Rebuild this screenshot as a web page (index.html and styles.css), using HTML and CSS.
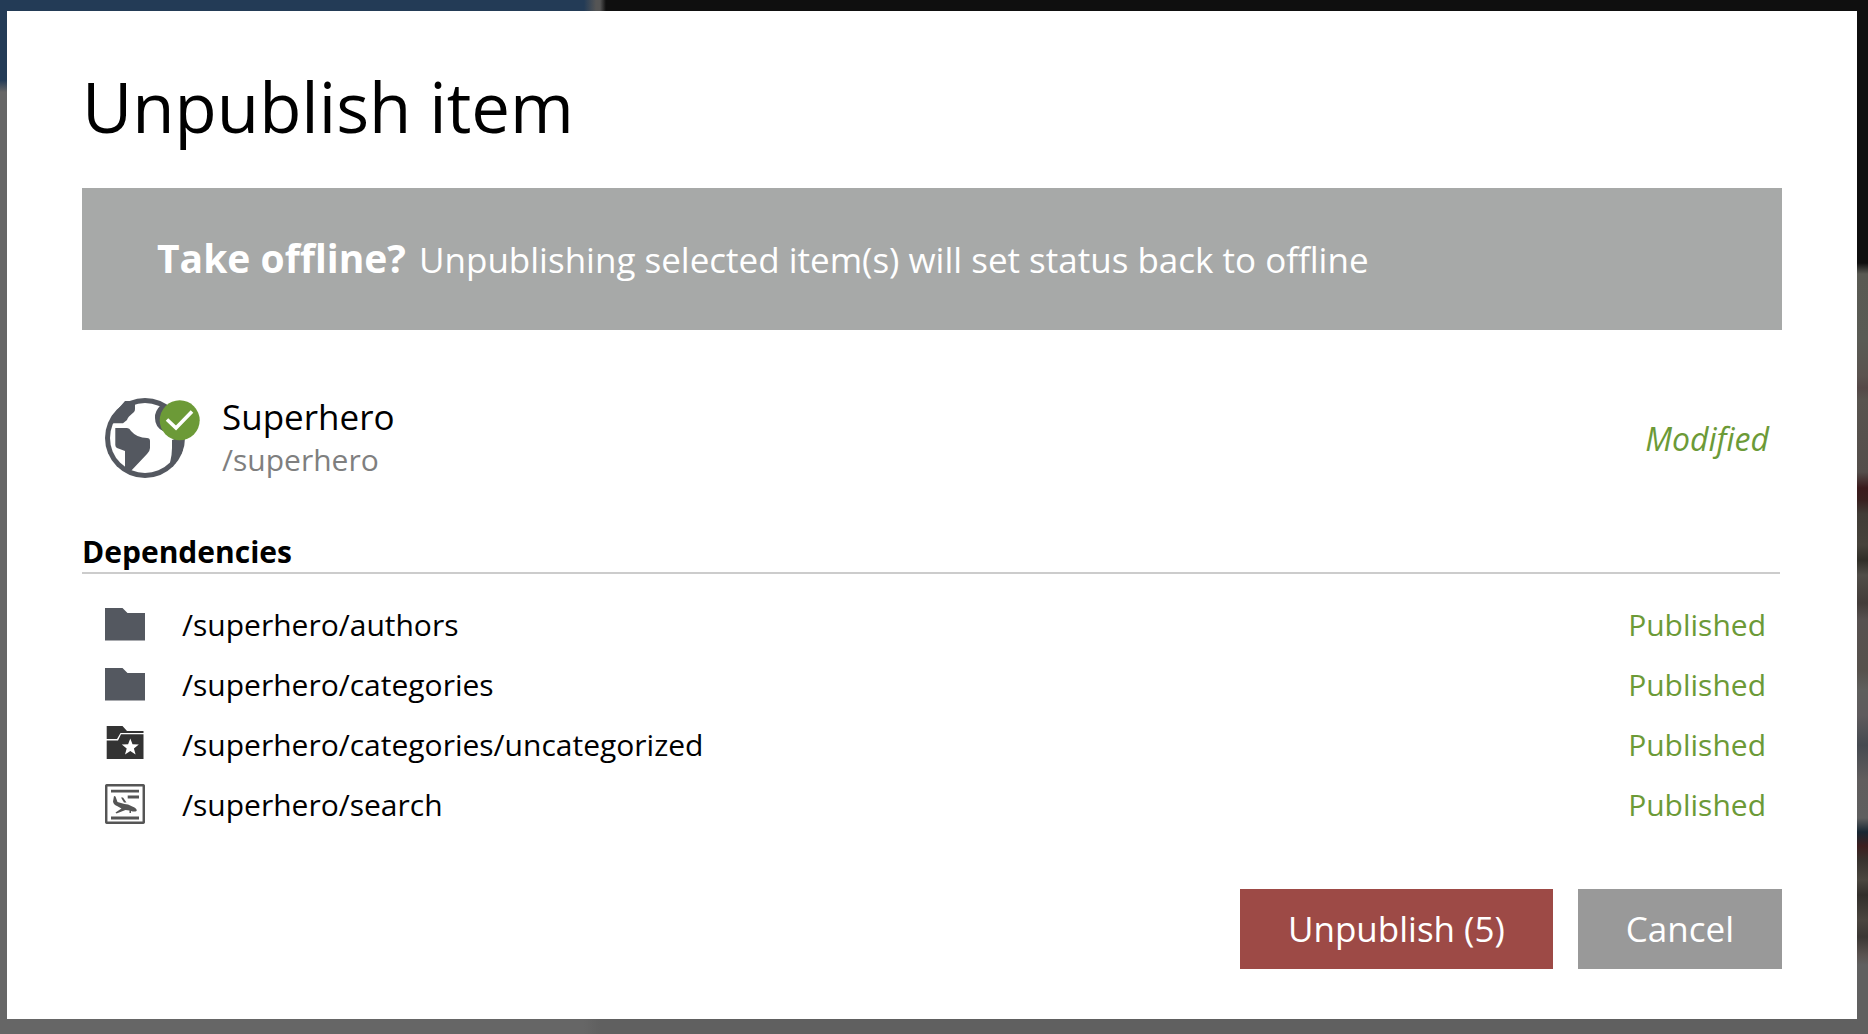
FILE: index.html
```html
<!DOCTYPE html>
<html lang="en">
<head>
<meta charset="utf-8">
<meta name="viewport" content="width=device-width, initial-scale=1">
<title>Unpublish item</title>
<link rel="stylesheet" href="styles.css">
</head>
<body>
<svg class="symbols" aria-hidden="true">
  <symbol id="folder" viewBox="0 0 40 40"><path fill="#545860" d="M0 4H17.5L22.5 9H40V36.5H0z"/></symbol>
</svg>
<div class="backdrop">
  <main class="dialog" role="dialog" aria-labelledby="title">
    <h1 class="title" id="title">Unpublish item</h1>
    <p class="banner"><strong class="banner-lead">Take offline?</strong> Unpublishing selected item(s) will set status back to offline</p>

    <section class="item">
      <svg class="item-icon" viewBox="0 0 96 80" aria-hidden="true">
        <circle cx="40" cy="40" r="40" fill="#545860"/>
        <circle cx="40" cy="40" r="35" fill="#fff"/>
        <g fill="#545860">
          <path d="M7 25.300H18L22 22Q22.500 20 24 18.500L29 14Q30 13 30 11V3H20L7 18z"/>
          <path d="M10.300 30H22Q24.500 30 26 33Q32 40 42 40Q45 40 45 43V50Q45 53 42 56L25 74L20 72V53L12 50Q10.300 49 10.300 47z"/>
          <path d="M56 7Q49.500 13 50 20Q50 29 58 33L74 22L62 8z"/>
          <path d="M67 42V50Q67 57 65 65L70 66L78 52V38z"/>
        </g>
        <circle cx="74.700" cy="22.300" r="20" fill="#6c9a37"/>
        <path d="M62 21.500L71 30L87 13.500" fill="none" stroke="#fff" stroke-width="3.600"/>
      </svg>
      <div class="item-names">
        <h2 class="item-name">Superhero</h2>
        <p class="item-path">/superhero</p>
      </div>
      <span class="status status-modified">Modified</span>
    </section>

    <h3 class="section-title">Dependencies</h3>
    <ul class="dependencies">
      <li class="row"><svg class="row-icon" aria-hidden="true"><use href="#folder"/></svg><span class="row-path">/superhero/authors</span><span class="status">Published</span></li>
      <li class="row"><svg class="row-icon" aria-hidden="true"><use href="#folder"/></svg><span class="row-path">/superhero/categories</span><span class="status">Published</span></li>
      <li class="row">
        <svg class="row-icon" viewBox="0 0 40 40" aria-hidden="true">
          <path fill="#333" d="M1.700 2H17.500L22 7H38.500V9H15.500L12 15H1.700zM1.700 16.500H13L16 10.300H38.500V35H1.700z"/>
          <path fill="#fff" d="M25.300 14.500L27.500 20.300L33.800 20.600L28.900 24.500L30.600 30.600L25.300 27.100L20 30.600L21.700 24.500L16.800 20.600L23.100 20.300z"/>
        </svg>
        <span class="row-path">/superhero/categories/uncategorized</span><span class="status">Published</span>
      </li>
      <li class="row">
        <svg class="row-icon" viewBox="0 0 40 40" aria-hidden="true">
          <rect x="1.200" y="1.200" width="37.600" height="37.600" rx="1" fill="none" stroke="#555" stroke-width="2.500"/>
          <path d="M6 7.200H34M22.700 13H34M6 34H34" stroke="#555" stroke-width="2.800"/>
          <path fill="#555" d="M9 12L10.500 12.500L12.500 18L19.500 20L23 20.500L29.500 23.500Q32.500 25.500 31.500 27Q29.500 28 26 27V29H24.500V26.500L20.500 26L11.500 29.500L10.500 28.500L16.500 24.500L12 22Q8.500 20.500 8 17.500zM16 13.500L18 13.500L21.500 18.500L19 18.500z"/>
        </svg>
        <span class="row-path">/superhero/search</span><span class="status">Published</span>
      </li>
    </ul>

    <div class="actions">
      <button class="button button-danger" type="button">Unpublish (5)</button>
      <button class="button" type="button">Cancel</button>
    </div>
  </main>
</div>
</body>
</html>
```
FILE: styles.css
```css
* { box-sizing: border-box; }

body {
  margin: 0;
  font-family: "Open Sans", "Noto Sans", sans-serif;
  color: #000;
}

h1, h2, h3, p, ul { margin: 0; padding: 0; }

.symbols { display: none; }

/* Dimmed, out-of-focus page behind the dialog */
.backdrop {
  display: flex;
  min-height: 100vh;
  padding: 11px 11px 15px 7px;
  background:
    linear-gradient(90deg, #666 584px, #606060 600px) bottom / 100% 15px no-repeat,
    linear-gradient(90deg, #233b56 584px, #555 596px, #555 600px, #0f0f0f 606px) top / 100% 11px no-repeat,
    linear-gradient(180deg, #0f0f0f 263px, #595a53 274px, #5a5b55 340px, #5a534f 376px, #544847 388px,
      #58544f 400px, #544e4b 472px, #3a1a1c 488px, #38201f 500px, #403c36 514px, #46423b 545px,
      #302e28 560px, #504d48 575px, #423c39 603px, #575150 620px, #56514c 670px, #5f5f5d 690px,
      #5f5b5d 715px, #454a50 745px, #605d5d 780px, #5f5f5f 818px, #182733 832px, #3c1f1f 846px,
      #37322e 860px, #4a463f 880px, #322f2b 895px, #4a453f 920px, #3b3734 937px, #5a5350 955px,
      #606060 965px) right / 11px 100% no-repeat,
    linear-gradient(180deg, #233b56 80px, #666 92px);
}

.dialog {
  flex: 1;
  padding: 48px 75px 50px;
  background: #fff;
}

.title {
  font-size: 69px;
  font-weight: 400;
  line-height: 94px;
}

.banner {
  margin-top: 35px;
  padding: 44px 75px 42px;
  background: #a7a9a8;
  color: #fff;
  font-size: 35px;
  font-weight: 400;
  line-height: 56px;
}

.banner-lead {
  margin-right: 4px;
  font-size: 39px;
  font-weight: 700;
  line-height: 1;
}

.item {
  display: flex;
  align-items: center;
  gap: 21px;
  margin-top: 65px;
  padding: 0 13px 0 23px;
}

.item-icon { width: 96px; height: 80px; }

.item-names { flex: 1; }

.item-name {
  font-size: 35px;
  font-weight: 400;
  line-height: 44px;
}

.item-path {
  color: #7f7f7f;
  font-size: 30px;
  line-height: 42px;
}

.status {
  color: #6c9a37;
  font-size: 30px;
}

.status-modified {
  font-size: 32px;
  font-style: italic;
}

.section-title {
  margin: 51px 2px 0 0;
  border-bottom: 2px solid #ccc;
  font-size: 30px;
  font-weight: 700;
  line-height: 40px;
}

.dependencies {
  margin-top: 20px;
  list-style: none;
}

.row {
  display: flex;
  align-items: center;
  gap: 37px;
  height: 60px;
  padding: 0 16px 0 23px;
  font-size: 30px;
}

.row-icon { width: 40px; height: 40px; }

.row-path { flex: 1; }

.actions {
  display: flex;
  justify-content: flex-end;
  gap: 25px;
  margin-top: 55px;
}

.button {
  height: 80px;
  padding: 0 48px 2px;
  border: 0;
  background: #999;
  color: #fff;
  font: 400 35px "Open Sans", "Noto Sans", sans-serif;
}

.button-danger { background: #9d4a46; }
```
